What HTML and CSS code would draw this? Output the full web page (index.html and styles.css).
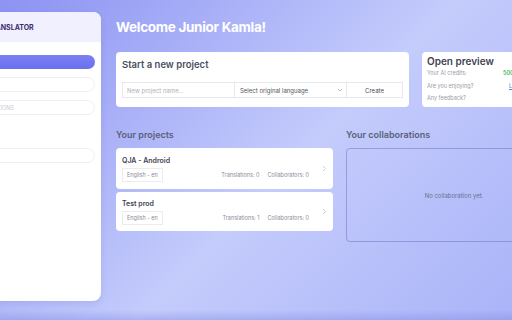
FILE: index.html
```html
<!DOCTYPE html>
<html lang="en">
<head>
    <meta charset="UTF-8">
    <meta name="viewport" content="width=device-width, initial-scale=1.0">
    <title>Dashboard</title>
    <link rel="stylesheet" href="styles.css">
</head>
<body>

<div class="page">
    <aside class="sidebar">
        <div class="sidebar-head">QJA TRANSLATOR</div>
        <div class="sidebar-body">
            <div class="nav-item active"></div>
            <div class="nav-item"></div>
            <div class="nav-item placeholder">TRANSLATIONS</div>
            <div class="nav-label"></div>
            <div class="nav-item"></div>
        </div>
    </aside>

    <main class="main">
        <h1 class="welcome">Welcome Junior Kamla!</h1>

        <div class="top-row">
            <div class="card new-project">
                <h2>Start a new project</h2>
                <div class="form-row">
                    <input type="text" class="field name" placeholder="New project name...">
                    <div class="field select">
                        <span>Select original language</span>
                        <svg width="6" height="4" viewBox="0 0 6 4"><path d="M1 1l2 2 2-2" fill="none" stroke="#aaa" stroke-width="0.7"/></svg>
                    </div>
                    <button class="field create">Create</button>
                </div>
            </div>

            <div class="card preview">
                <h2>Open preview</h2>
                <div class="preview-row"><span class="label">Your AI credits:</span><span class="credits">500 credits</span></div>
                <div class="preview-row"><span class="label">Are you enjoying?</span><a href="#" class="link">Like it</a></div>
                <div class="preview-row"><span class="label">Any feedback?</span></div>
            </div>
        </div>

        <div class="bottom-row">
            <section>
                <h3 class="section-title">Your projects</h3>
                <div class="project">
                    <div class="project-info">
                        <div class="project-name">QJA - Android</div>
                        <div class="project-meta">
                            <span class="tag">English - en</span>
                            <span class="stats">Translations: 0<span class="gap"></span>Collaborators: 0</span>
                        </div>
                    </div>
                    <svg class="chevron" width="5" height="7" viewBox="0 0 5 7"><path d="M1 1l2.5 2.5L1 6" fill="none" stroke="#c4c4c4" stroke-width="0.8"/></svg>
                </div>
                <div class="project">
                    <div class="project-info">
                        <div class="project-name">Test prod</div>
                        <div class="project-meta">
                            <span class="tag">English - en</span>
                            <span class="stats">Translations: 1<span class="gap"></span>Collaborators: 0</span>
                        </div>
                    </div>
                    <svg class="chevron" width="5" height="7" viewBox="0 0 5 7"><path d="M1 1l2.5 2.5L1 6" fill="none" stroke="#c4c4c4" stroke-width="0.8"/></svg>
                </div>
            </section>

            <section>
                <h3 class="section-title">Your collaborations</h3>
                <div class="empty-box">No collaboration yet.</div>
            </section>
        </div>
    </main>
</div>

<div class="bottom-fade"></div>

</body>
</html>
```

FILE: styles.css
```css
* {
    margin: 0;
    padding: 0;
    box-sizing: border-box;
    font-family: 'Inter', 'Liberation Sans', sans-serif;
}

html, body {
    width: 512px;
    height: 320px;
    overflow: hidden;
}

body {
    display: flex;
    flex-direction: column;
    background: linear-gradient(135deg, #8d93f2 0%, #c4ccfc 55%, #aab3f8 100%);
}

.page {
    display: flex;
    gap: 15px;
    padding-top: 12px;
    flex: 1;
}

.sidebar {
    flex: 0 0 190px;
    margin-left: -89px;
    height: 289px;
    background: #fff;
    border-radius: 8px;
    overflow: hidden;
    box-shadow: 0 2px 6px rgba(60, 60, 160, 0.12);
}

.sidebar-head {
    height: 30px;
    background: #f1f0fe;
    color: #3a2c6e;
    font-size: 7px;
    font-weight: 700;
    display: flex;
    align-items: center;
    padding-left: 59px;
}

.sidebar-body {
    padding: 13px 6px 0 6px;
    display: flex;
    flex-direction: column;
    gap: 8px;
}

.nav-item {
    height: 15px;
    border: 1px solid #efeff3;
    border-radius: 8px;
    font-size: 5.5px;
    color: #c9c9d2;
    display: flex;
    align-items: center;
    padding-left: 54px;
}

.nav-item.active {
    height: 14px;
    border: none;
    background: linear-gradient(180deg, #7b80f3, #6a6ff0);
}

.nav-label {
    height: 17px;
}

.main {
    flex: 0 0 446px;
}

.welcome {
    color: #fff;
    font-size: 13.5px;
    font-weight: 700;
    letter-spacing: -0.3px;
    margin-top: 7px;
    height: 33px;
}

.top-row {
    display: grid;
    grid-template-columns: 293px 140px;
    gap: 13px;
}

.card {
    background: #fff;
    border-radius: 4px;
    height: 55px;
}

.new-project {
    padding: 7px 6px 0 6px;
}

.new-project h2 {
    font-size: 9.5px;
    font-weight: 600;
    color: #4a5060;
    height: 23px;
}

.form-row {
    display: flex;
}

.field {
    height: 16px;
    border: 1px solid #e8e8ec;
    background: #fff;
    font-size: 6px;
    color: #555;
    outline: none;
}

.field.name {
    width: 113px;
    padding-left: 4px;
}

.field.name::placeholder {
    color: #b0b0b8;
}

.field.select {
    width: 113px;
    margin-left: -1px;
    display: flex;
    align-items: center;
    justify-content: space-between;
    padding: 0 3px 0 5px;
}

.field.create {
    width: 57px;
    margin-left: -1px;
    color: #4a4a55;
}

.preview {
    padding: 3px 5px 0 5px;
}

.preview h2 {
    font-size: 10px;
    font-weight: 600;
    color: #3e4250;
    height: 15px;
}

.preview-row {
    display: flex;
    font-size: 5.5px;
    color: #9a9ca8;
    height: 12.5px;
}

.label {
    width: 76px;
}

.credits {
    color: #3fb55d;
    font-weight: 600;
}

.link {
    color: #5b7be0;
    margin-left: 6px;
}

.bottom-row {
    display: grid;
    grid-template-columns: 217px 216px;
    gap: 13px;
    margin-top: 22px;
}

.section-title {
    font-size: 9px;
    font-weight: 600;
    color: #5a6078;
    height: 19px;
}

.project {
    background: #fff;
    border-radius: 4px;
    height: 41px;
    display: flex;
    align-items: center;
    padding: 0 6px;
    margin-bottom: 3px;
}

.project + .project {
    height: 39px;
}

.project-info {
    flex: 1;
}

.project-name {
    font-size: 7px;
    font-weight: 600;
    color: #3e4350;
    margin-bottom: 3px;
}

.project-meta {
    display: flex;
    justify-content: space-between;
    align-items: center;
    padding-right: 13px;
}

.tag {
    font-size: 5.5px;
    color: #8a8c96;
    border: 1px solid #ececf0;
    padding: 3px 4px;
}

.stats {
    font-size: 5.5px;
    color: #8a8c96;
}

.gap {
    display: inline-block;
    width: 8px;
}

.chevron {
    flex: 0 0 5px;
}

.empty-box {
    height: 94px;
    border: 1px solid rgba(110, 120, 200, 0.55);
    border-radius: 4px;
    display: flex;
    align-items: center;
    justify-content: center;
    font-size: 6px;
    color: #6a7090;
}

.bottom-fade {
    height: 10px;
    background: linear-gradient(180deg, rgba(120, 130, 220, 0), rgba(120, 130, 220, 0.35));
}
```
